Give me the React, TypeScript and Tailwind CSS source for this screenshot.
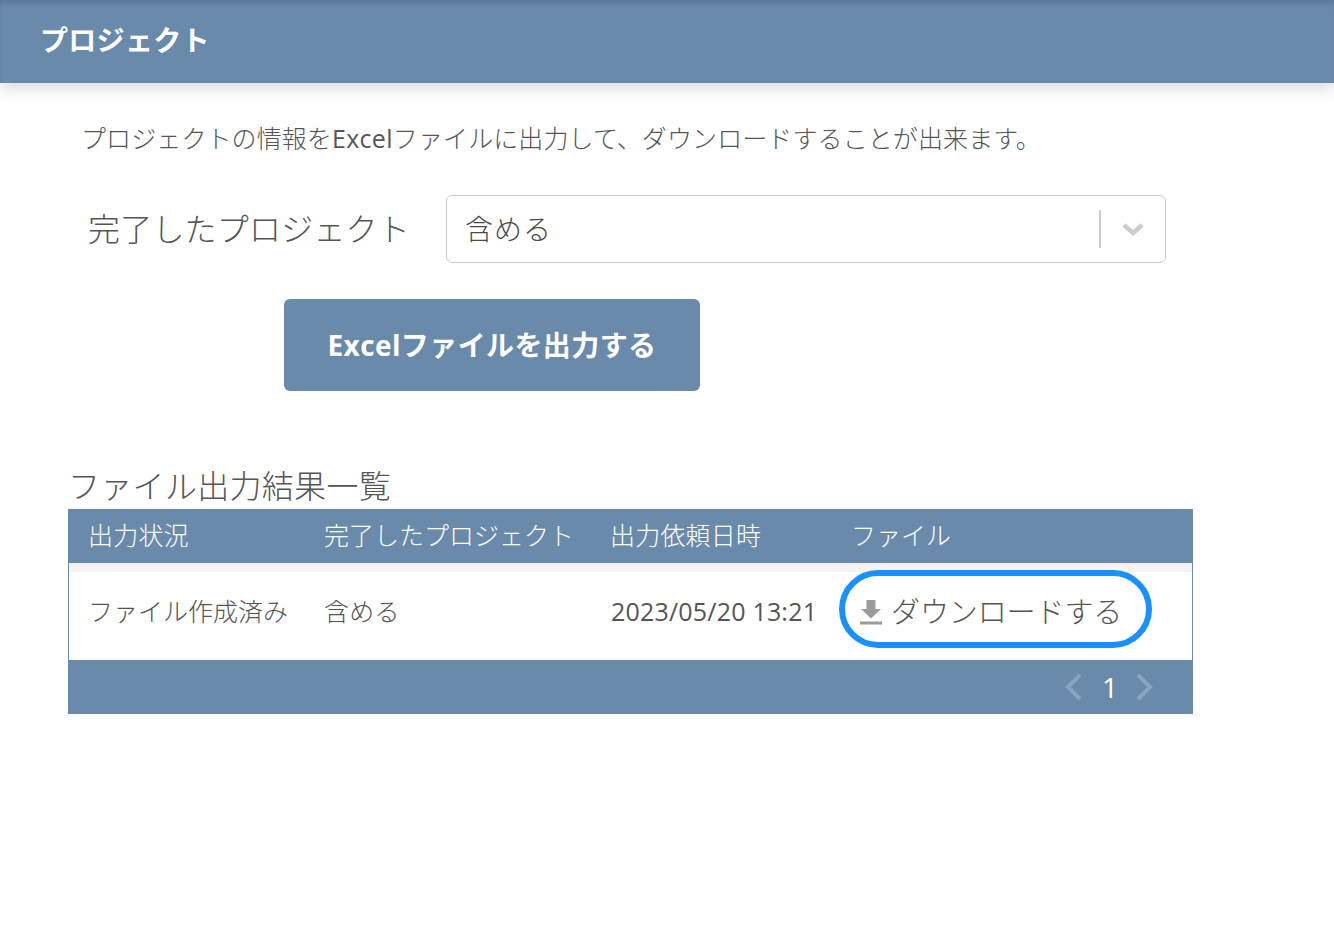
import React from "react";

const font = { fontFamily: '"Open Sans","Noto Sans CJK JP",sans-serif' };

export default function App() {
  return (
    <div style={font} className="min-h-[928px] w-[1334px] overflow-hidden bg-white font-light text-[#555555]">
      <header className="flex h-[83px] items-center bg-[#6a8aab] pb-[4px] pl-[40px] shadow-[inset_0_5px_6px_-3px_rgba(50,70,100,0.35),0_6px_14px_rgba(0,0,0,0.14)]">
        <h1 className="text-[28px] font-bold leading-none tracking-[0.3px] text-white">プロジェクト</h1>
      </header>

      <p className="mt-[39px] ml-[81px] text-[25px] leading-[33px] tracking-[0.1px]">
        プロジェクトの情報を<span className="font-normal tracking-[0.3px]">Excel</span>ファイルに出力して、ダウンロードすることが出来ます。
      </p>

      <div className="mt-[40px] ml-[88px] flex items-center">
        <label className="w-[358px] text-[32px] leading-none tracking-[0.2px]">完了したプロジェクト</label>
        <div className="flex h-[68px] w-[720px] items-center rounded-[6px] border border-[#cccccc] pl-[18px]">
          <span className="flex-1 text-[28px] tracking-[1px] text-[#4a4a4a]">含める</span>
          <span className="h-[38px] w-[2px] translate-x-px bg-[#cccccc]" />
          <span className="flex w-[65px] justify-center">
            <svg width="22" height="14" viewBox="0 0 22 14" fill="none">
              <path d="M2 3 L11 11 L20 3" stroke="#cccccc" strokeWidth="4.5" />
            </svg>
          </span>
        </div>
      </div>

      <button className="mt-[36px] ml-[284px] flex h-[92px] w-[416px] items-center justify-center rounded-[6px] bg-[#6a8aab] text-[28px] font-bold tracking-[0.4px] text-white">
        Excelファイルを出力する
      </button>

      <section className="mt-[74px] ml-[68px] w-[1125px]">
        <h2 className="h-[44px] pb-[2px] text-[32px] leading-[42px] tracking-[0.3px]">ファイル出力結果一覧</h2>
        <div className="grid h-[54px] grid-cols-[256px_287px_242px_340px] items-center bg-[#6a8aab] text-[25px] text-white">
          <div className="pl-[20px] tracking-[0.2px]">出力状況</div>
          <div>完了したプロジェクト</div>
          <div className="-ml-px tracking-[0.2px]">出力依頼日時</div>
          <div className="-ml-[2px]">ファイル</div>
        </div>
        <div className="relative border-x border-[#6a8aab]">
          <div className="h-[9px] bg-[#f4f4f4]" />
          <div className="grid h-[88px] grid-cols-[255px_287px_242px_339px] items-center pb-[8px] text-[25px]">
            <div className="pl-[19px]">ファイル作成済み</div>
            <div className="tracking-[0.3px]">含める</div>
            <div className="font-normal tracking-[0.2px]">2023/05/20 13:21</div>
            <div className="flex items-center pl-[6px] text-[29px] tracking-[-0.1px]">
              <svg width="24" height="26" viewBox="0 0 24 26" className="mr-[8px]" fill="#9b9b9b">
                <path d="M7.5 1h9v9h5.5L12 19.5 2 10h5.5z" />
                <rect x="1" y="22.5" width="22" height="3" />
              </svg>
              ダウンロードする
            </div>
          </div>
          <div className="absolute top-[7px] left-[770px] h-[78px] w-[313px] rounded-full border-[6px] border-[#1890ff]" />
        </div>
        <div className="flex h-[54px] items-center justify-end bg-[#6a8aab] pr-[39px] text-[28px] font-normal text-white">
          <svg width="18" height="28" viewBox="0 0 18 28" fill="none" stroke="#8aa4bf" strokeWidth="4" className="-translate-x-px">
            <path d="M15 2 L3 14 L15 26" />
          </svg>
          <span className="w-[52px] text-center leading-none">1</span>
          <svg width="18" height="28" viewBox="0 0 18 28" fill="none" stroke="#8aa4bf" strokeWidth="4" className="-translate-x-px">
            <path d="M3 2 L15 14 L3 26" />
          </svg>
        </div>
      </section>
    </div>
  );
}
